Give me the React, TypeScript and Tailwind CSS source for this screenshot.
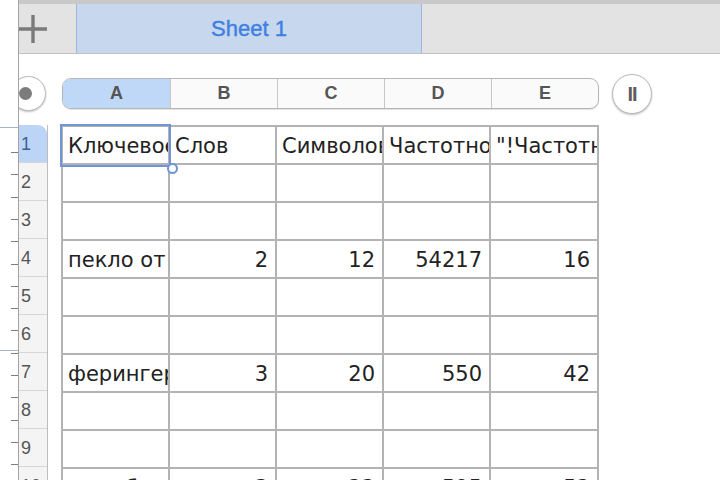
import React from "react";

const cols = ["A", "B", "C", "D", "E"];

type Cell = { v: string; num?: boolean };

const rows: Cell[][] = [
  [{ v: "Ключевое слово" }, { v: "Слов" }, { v: "Символов" }, { v: "Частотность" }, { v: "\"!Частотность\"" }],
  [],
  [],
  [{ v: "пекло от" }, { v: "2", num: true }, { v: "12", num: true }, { v: "54217", num: true }, { v: "16", num: true }],
  [],
  [],
  [{ v: "ферингер" }, { v: "3", num: true }, { v: "20", num: true }, { v: "550", num: true }, { v: "42", num: true }],
  [],
  [],
  [{ v: "кто обманул" }, { v: "3", num: true }, { v: "22", num: true }, { v: "595", num: true }, { v: "52", num: true }],
];

const tickYs = Array.from({ length: 15 }, (_, i) => 152 + i * 22.3);

function LeftStrip() {
  return (
    <div className="w-[19px] shrink-0 h-full border-r border-[#a3a3a3] bg-white">
      <svg width="18" height="480" viewBox="0 0 18 480">
        <line x1="0" y1="127.5" x2="18" y2="127.5" stroke="#a9b4c6" strokeWidth="1" />
        <line x1="0" y1="350.5" x2="18" y2="350.5" stroke="#a9b4c6" strokeWidth="1" />
        {tickYs.map((y) => (
          <line key={y} x1="11" y1={Math.round(y) + 0.5} x2="18" y2={Math.round(y) + 0.5} stroke="#7d7d7d" strokeWidth="1" />
        ))}
      </svg>
    </div>
  );
}

function TabBar() {
  return (
    <div className="shrink-0">
      <div className="h-[4px] bg-[#c9c9c9]" />
      <div className="h-[50px] flex bg-[#e3e3e3] border-b border-[#c2c2c2]">
        <div className="w-[57px] shrink-0 flex items-center justify-start">
          <svg width="30" height="30" viewBox="0 0 30 30" className="-ml-[1px]">
            <path d="M1 15H29M15 1V29" stroke="#7b7b7b" strokeWidth="3.4" />
          </svg>
        </div>
        <div className="w-[346px] shrink-0 bg-[#c7d7ee] border-x border-[#9fb6dc] flex items-center justify-center">
          <span className="text-[22px] text-[#3e7fe2] font-['Liberation_Sans',Arial,sans-serif] [-webkit-text-stroke:0.4px_#3e7fe2]">Sheet 1</span>
        </div>
        <div className="flex-1" />
      </div>
    </div>
  );
}

function ColumnHeader() {
  return (
    <div className="mt-[22px] h-[35px] flex items-center">
      <div className="w-[35px] h-[35px] -ml-[8px] shrink-0 rounded-full bg-white border border-[#b9b9b9] shadow-[0_1px_2px_rgba(0,0,0,0.25)] flex items-center justify-center">
        <div className="w-[13px] h-[13px] rounded-full bg-[#7c7c7c] -ml-[6px]" />
      </div>
      <div className="ml-[16px] w-[537px] h-[31px] shrink-0 flex rounded-[9px] border border-[#b5b5b5] overflow-hidden bg-[#fafafa] shadow-[0_1px_1px_rgba(0,0,0,0.12)]">
        {cols.map((c, i) => (
          <div
            key={c}
            className={`flex items-center justify-center font-bold text-[18px] text-[#555] font-['Liberation_Sans',Arial,sans-serif] ${
              i === 0 ? "w-[107px] bg-[#c0d8f8]" : "w-[107px] border-l border-[#c6c6c6]"
            } ${i === 4 ? "flex-1" : "shrink-0"}`}
          >
            {c}
          </div>
        ))}
      </div>
      <div className="ml-[13px] w-[40px] h-[40px] shrink-0 rounded-full bg-white border border-[#b9b9b9] shadow-[0_1px_2px_rgba(0,0,0,0.25)] flex items-center justify-center">
        <span className="font-bold text-[20px] text-[#5d5d5d] font-['Liberation_Sans',Arial,sans-serif] tracking-[-1px] leading-none">II</span>
      </div>
    </div>
  );
}

function Grid() {
  return (
    <div className="mt-[14px] flex">
      {/* row headers */}
      <div className="w-[29px] shrink-0 border-r border-[#bdbdbd] flex flex-col">
        {rows.map((_, i) => (
          <div
            key={i}
            className={`h-[38px] shrink-0 border-b border-[#d6d6d6] flex items-center pl-[2px] pt-[1px] text-[18px] font-['Liberation_Sans',Arial,sans-serif] ${
              i === 0 ? "bg-[#bcd4f5] rounded-tr-[9px] text-[#3f5f94]" : "bg-[#f4f4f4] text-[#555]"
            }`}
          >
            {i + 1}
          </div>
        ))}
      </div>
      {/* cells */}
      <div className="relative ml-[13px] border-l-2 border-t-2 border-[#b3b3b3] font-['DejaVu_Sans',Verdana,sans-serif] text-[21px] text-[#222]">
        {rows.map((r, i) => (
          <div key={i} className="flex h-[38px]">
            {cols.map((c, j) => {
              const cell = r[j];
              return (
                <div
                  key={c}
                  className={`${j === 4 ? "w-[108px]" : "w-[107px]"} h-[38px] shrink-0 border-r-2 border-b-2 border-[#b3b3b3] overflow-hidden whitespace-nowrap flex items-center pt-[3px] ${
                    cell?.num ? "justify-end pr-[7px]" : "pl-[5px]"
                  }`}
                >
                  {cell ? cell.v : ""}
                </div>
              );
            })}
          </div>
        ))}
        {/* selection */}
        <div className="absolute -left-[3px] -top-[3px] w-[111px] h-[43px] border-2 border-[#6f95d6]" />
        <div className="absolute left-[104px] top-[36px] w-[11px] h-[11px] rounded-full bg-white border-2 border-[#6f95d6]" />
      </div>
    </div>
  );
}

export default function App() {
  return (
    <div className="w-[720px] h-[480px] overflow-hidden flex bg-white">
      <LeftStrip />
      <div className="flex-1 flex flex-col overflow-hidden">
        <TabBar />
        <ColumnHeader />
        <Grid />
      </div>
    </div>
  );
}
